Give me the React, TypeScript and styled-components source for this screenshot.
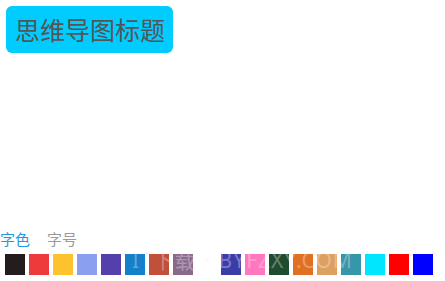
import React from "react";
import styled, { createGlobalStyle } from "styled-components";

const Global = createGlobalStyle`
  html, body { margin: 0; padding: 0; background: #fff; }
  body { font-family: "Noto Sans CJK SC", "Noto Sans", sans-serif; }
`;

const Page = styled.div`
  position: relative;
  height: 281px;
  display: flex;
  flex-direction: column;
  overflow: hidden;
`;

const Title = styled.div`
  align-self: flex-start;
  margin: 6px 0 0 6px;
  height: 47px;
  padding: 0 8px 0 9px;
  box-sizing: border-box;
  display: flex;
  align-items: center;
  background: #00ccff;
  border-radius: 6px;
  color: #555555;
  font-size: 25px;
  line-height: 1;
`;

const Panel = styled.div`
  margin-top: auto;
  display: flex;
  flex-direction: column;
  padding-bottom: 6px;
`;

const Tabs = styled.div`
  display: flex;
  gap: 17px;
  height: 20px;
  align-items: center;
  margin-bottom: 5px;
`;

const Tab = styled.span<{ $active?: boolean }>`
  font-size: 15px;
  line-height: 20px;
  color: ${(p) => (p.$active ? "#1a9be2" : "#9a9a9a")};
`;

const Swatches = styled.div`
  display: flex;
  gap: 4px;
  padding-left: 5px;
`;

const Swatch = styled.div<{ $c: string }>`
  width: 20px;
  height: 21px;
  background: ${(p) => p.$c};
  box-sizing: border-box;
`;

const Watermark = styled.div`
  position: absolute;
  left: 132px;
  top: 244px;
  font-family: "Noto Sans", "Noto Sans CJK SC", sans-serif;
  font-size: 21px;
  color: rgba(255, 235, 250, 0.35);
  letter-spacing: 1px;
  pointer-events: none;
  white-space: nowrap;
`;

const colors = [
  "#231e1d",
  "#ef3a3b",
  "#fec22f",
  "#8a9ff0",
  "#5340ad",
  "#1380c9",
  "#c1503b",
  "#8a6a8c",
  "#ffffff",
  "#3a3ca8",
  "#ff77bf",
  "#1f4b2f",
  "#e07022",
  "#dda15f",
  "#3597a9",
  "#00e6ff",
  "#ff0000",
  "#0000ff",
];

export default function App() {
  return (
    <Page>
      <Global />
      <Title>思维导图标题</Title>
      <Panel>
        <Tabs>
          <Tab $active>字色</Tab>
          <Tab>字号</Tab>
        </Tabs>
        <Swatches>
          {colors.map((c, i) => (
            <Swatch key={i} $c={c} />
          ))}
        </Swatches>
      </Panel>
      <Watermark>IT下载 • BYFZXY.COM</Watermark>
    </Page>
  );
}
